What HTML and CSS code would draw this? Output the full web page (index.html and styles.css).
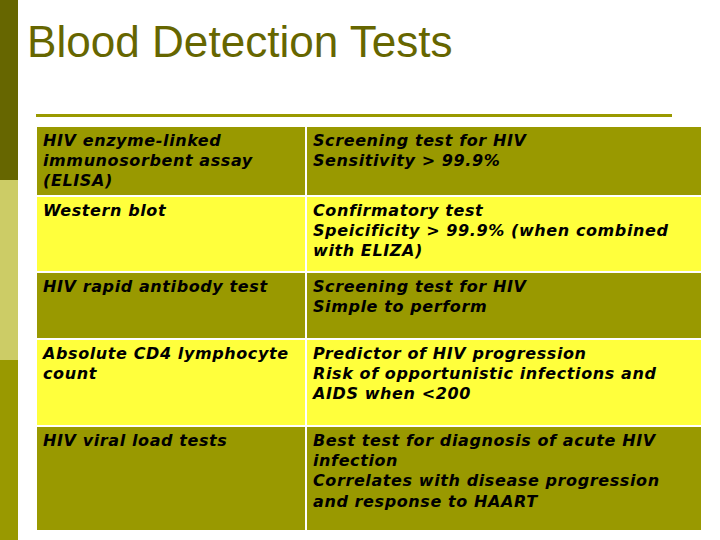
FILE: index.html
```html
<!DOCTYPE html>
<html>
<head>
<meta charset="utf-8">
<link rel="stylesheet" href="styles.css">
</head>
<body>
<div class="slide">
  <div class="sidebar">
    <div class="seg seg-dark"></div>
    <div class="seg seg-light"></div>
    <div class="seg seg-mid"></div>
  </div>
  <div class="main">
    <h1 class="title">Blood Detection Tests</h1>
    <div class="rule"></div>
    <div class="table">
      <div class="cell olive">HIV enzyme-linked immunosorbent assay (ELISA)</div>
      <div class="cell olive">Screening test for HIV<br>Sensitivity &gt; 99.9%</div>
      <div class="cell yellow">Western blot</div>
      <div class="cell yellow">Confirmatory test<br>Speicificity &gt; 99.9% (when combined with ELIZA)</div>
      <div class="cell olive">HIV rapid antibody test</div>
      <div class="cell olive">Screening test for HIV<br>Simple to perform</div>
      <div class="cell yellow">Absolute CD4 lymphocyte count</div>
      <div class="cell yellow">Predictor of HIV progression<br>Risk of opportunistic infections and AIDS when &lt;200</div>
      <div class="cell olive">HIV viral load tests</div>
      <div class="cell olive">Best test for diagnosis of acute HIV infection<br>Correlates with disease progression and response to HAART</div>
    </div>
  </div>
</div>
</body>
</html>
```
FILE: styles.css
```css
html, body {
  margin: 0;
  padding: 0;
  background: #ffffff;
}
.slide {
  width: 720px;
  height: 540px;
  display: flex;
  overflow: hidden;
}
.sidebar {
  width: 18px;
  display: flex;
  flex-direction: column;
}
.seg { height: 180px; }
.seg-dark { background: #666600; }
.seg-light { background: #cccc66; }
.seg-mid { background: #999900; }
.main {
  flex: 1;
  display: flex;
  flex-direction: column;
}
.title {
  margin: 20px 0 0 9px;
  font-family: "Liberation Sans", Arial, sans-serif;
  font-weight: normal;
  font-size: 44.1px;
  line-height: 43.5px;
  color: #666600;
}
.rule {
  margin: 50px 0 0 18px;
  width: 636px;
  height: 3px;
  background: #999900;
}
.table {
  margin: 10px 0 0 19px;
  display: grid;
  grid-template-columns: 268px 394px;
  grid-template-rows: 68px 74px 65px 85px 103px;
  gap: 2px;
}
.cell {
  padding: 4px 6px 0 6px;
  font-family: "DejaVu Sans", Verdana, sans-serif;
  font-weight: bold;
  font-style: italic;
  font-size: 16px;
  line-height: 20.4px;
  letter-spacing: 0.6px;
  color: #000000;
}
.olive { background: #999900; }
.yellow { background: #ffff3c; }
```
